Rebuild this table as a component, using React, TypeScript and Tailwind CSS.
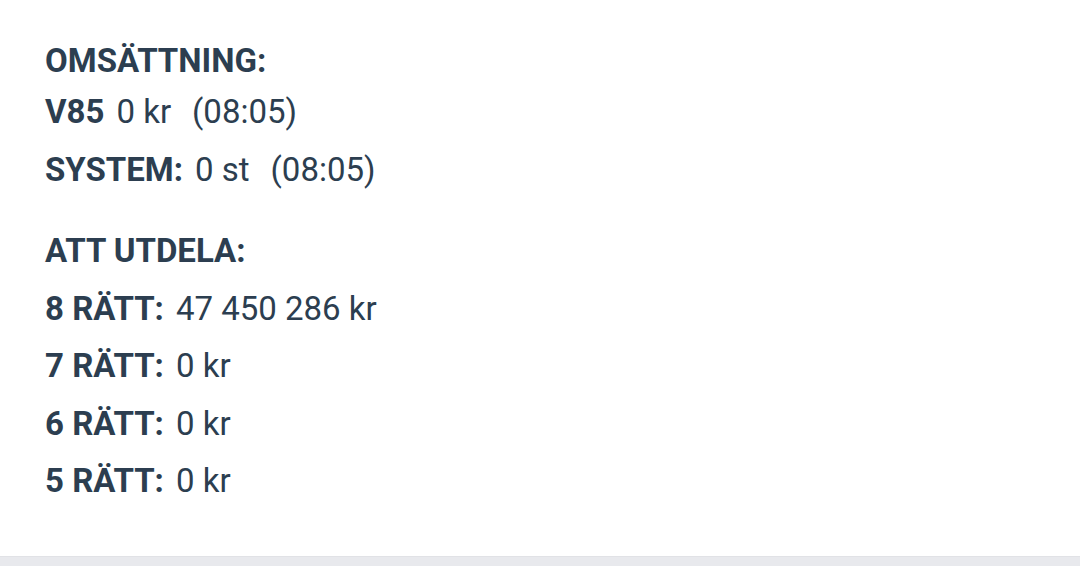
import React from "react";

const turnover = [
  { label: "V85", value: "0 kr", time: "(08:05)" },
  { label: "SYSTEM:", value: "0 st", time: "(08:05)" },
];

const payouts = [
  { label: "8 RÄTT:", value: "47 450 286 kr" },
  { label: "7 RÄTT:", value: "0 kr" },
  { label: "6 RÄTT:", value: "0 kr" },
  { label: "5 RÄTT:", value: "0 kr" },
];

export default function App() {
  return (
    <div className="w-[1080px] h-[566px] flex flex-col bg-white font-['Roboto',sans-serif] text-[#2c3e50] text-[33px]">
      <div className="h-[556px] pl-[45px] pt-[39px]">
        {/* Omsättning */}
        <div className="font-bold leading-[44px]">OMSÄTTNING:</div>
        {turnover.map((row) => (
          <div key={row.label} className="flex items-baseline leading-[58px]">
            <span className="font-bold">{row.label}</span>
            <span className="ml-[12px]">{row.value}</span>
            <span className="ml-[21px]">{row.time}</span>
          </div>
        ))}

        {/* Att utdela */}
        <div className="mt-[23px] font-bold leading-[57.5px]">ATT UTDELA:</div>
        {payouts.map((row) => (
          <div key={row.label} className="flex items-baseline leading-[57.5px]">
            <span className="font-bold">{row.label}</span>
            <span className="ml-[12px]">{row.value}</span>
          </div>
        ))}
      </div>
      <div className="flex-1 bg-[#e8e9ed] border-t border-[#e1e2e6]" />
    </div>
  );
}
